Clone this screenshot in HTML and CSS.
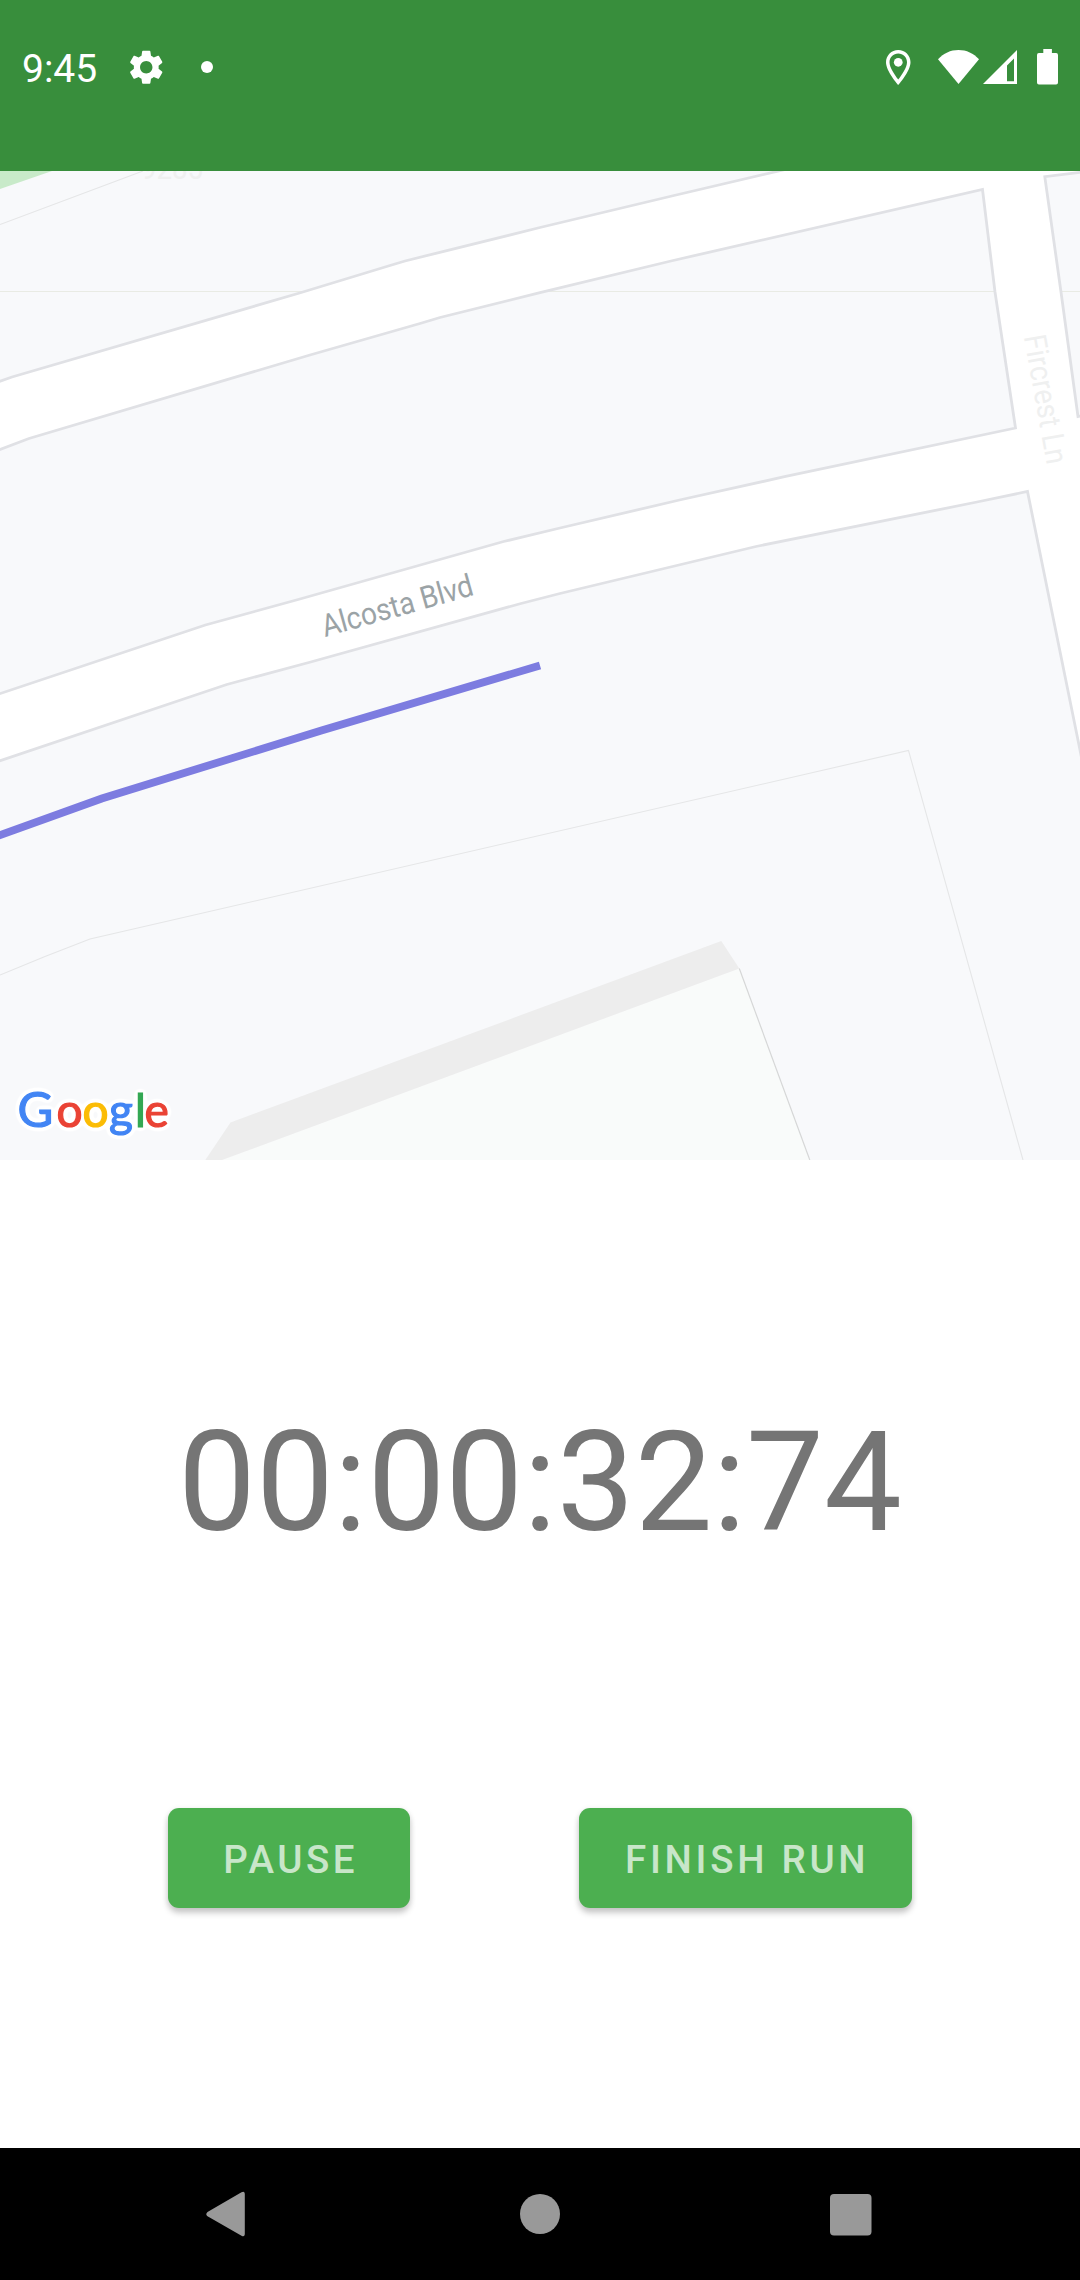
FILE: index.html
```html
<!DOCTYPE html>
<html lang="en">
<head>
<meta charset="utf-8">
<title>Run tracker</title>
<link rel="stylesheet" href="styles.css">
</head>
<body>
<div class="screen">
  <header class="status-bar">
    <div class="status-left">
      <span class="clock">9:45</span>
      <svg class="gear" viewBox="2 2 20 20"><path d="M19.14 12.94c.04-.3.06-.61.06-.94 0-.32-.02-.64-.07-.94l2.03-1.58c.18-.14.23-.41.12-.61l-1.92-3.32c-.12-.22-.37-.29-.59-.22l-2.39.96c-.5-.38-1.03-.7-1.62-.94l-.36-2.54c-.04-.24-.24-.41-.48-.41h-3.84c-.24 0-.43.17-.47.41l-.36 2.54c-.59.24-1.13.57-1.62.94l-2.39-.96c-.22-.08-.47 0-.59.22L2.74 8.87c-.12.21-.08.47.12.61l2.03 1.58c-.05.3-.09.63-.09.94s.02.64.07.94l-2.03 1.58c-.18.14-.23.41-.12.61l1.92 3.32c.12.22.37.29.59.22l2.39-.96c.5.38 1.03.7 1.62.94l.36 2.54c.05.24.24.41.48.41h3.84c.24 0 .44-.17.47-.41l.36-2.54c.59-.24 1.13-.56 1.62-.94l2.39.96c.22.08.47 0 .59-.22l1.92-3.32c.12-.22.07-.47-.12-.61l-2.01-1.58zM12 15.6c-1.98 0-3.6-1.62-3.6-3.6s1.62-3.6 3.6-3.6 3.6 1.62 3.6 3.6-1.62 3.6-3.6 3.6z"/></svg>
      <span class="dot"></span>
    </div>
    <div class="status-right">
      <svg class="pin" viewBox="5 2 14 20"><path d="M12 2C8.13 2 5 5.13 5 9c0 5.25 7 13 7 13s7-7.75 7-13c0-3.87-3.13-7-7-7zM7 9c0-2.76 2.24-5 5-5s5 2.24 5 5c0 2.88-2.88 7.19-5 9.88C9.92 16.21 7 11.85 7 9z"/><circle cx="12" cy="9" r="2.5"/></svg>
      <svg class="wifi" viewBox="0 0 41 34"><path d="M0 9.3C5.5 3.3 12.500 0 20.500 0S35.500 3.300 41 9.300L20.500 34z"/></svg>
      <svg class="signal" viewBox="0 0 34 34"><path fill-rule="evenodd" d="M34 0V34H0zM31 8.500L24 15.500V31.200H31z"/></svg>
      <svg class="battery" viewBox="0 0 21 35.500"><path d="M6.300 0h8.600v4h4.200a1.900 1.900 0 0 1 1.900 1.900v27.700a1.900 1.900 0 0 1-1.900 1.900H1.900a1.900 1.900 0 0 1-1.900-1.900V5.900A1.900 1.900 0 0 1 1.900 4h4.400z"/></svg>
    </div>
  </header>

  <main class="content">
    <svg class="map" viewBox="0 171 1080 989">
      <defs>
        <filter id="halo" x="-20%" y="-30%" width="140%" height="160%" color-interpolation-filters="sRGB">
          <feGaussianBlur in="SourceAlpha" stdDeviation="2.500" result="blur"/>
          <feComponentTransfer in="blur" result="spread"><feFuncA type="linear" slope="14" intercept="-0.300"/></feComponentTransfer>
          <feFlood flood-color="#fff"/>
          <feComposite in2="spread" operator="in" result="white"/>
          <feMerge><feMergeNode in="white"/><feMergeNode in="SourceGraphic"/></feMerge>
        </filter>
      </defs>
      <rect class="land" y="171" width="1080" height="989"/>
      <path class="park" d="M0 171H52L0 189z"/>
      <path class="parcel" d="M0 224.500L143 171M0 975L45 956.500L90 939L908.500 750.500L1023 1160"/>
      <path class="grid-line" d="M0 291.500H1080"/>
      <text class="label label-faint" x="141" y="178.500" textLength="62" lengthAdjust="spacingAndGlyphs">9285</text>

      <path class="road" d="M-5 383L12 377L299.600 293L390 265.500L405 261L540 227.500L674 195.500L800 166H1090V171.200L1044.800 176.700L1061 292L1078 416.500L1090 414V800L1080 750L1027.500 491.500L977 502L756 546.500L560 593.500L521 603.500L310.700 662L226.800 684.500L-5 762.500V695.300L205.400 625L300 599L503.600 541.500L560 528L679.500 500L784.500 476.700L1015.500 428L995 292L982.500 189.500L671 261L540 292.700L440 317.500L420 323.500L310 355L29 438.500L-5 451.500z"/>
      <text class="label label-faint" transform="translate(1023.800 336.500) rotate(79.800)" textLength="131" lengthAdjust="spacingAndGlyphs">Fircrest Ln</text>
      <text class="label label-road" transform="translate(325 637) rotate(-15.700)" textLength="156" lengthAdjust="spacingAndGlyphs">Alcosta Blvd</text>

      <path class="building-top" d="M739.300 968.500L809.800 1160H222z"/>
      <path class="building-side" d="M721.300 941L739.300 968.500L222 1160H205.300L230.500 1122.500z"/>
      <path class="building-edge" d="M739.300 968.500L809.800 1160"/>
      <path class="route" d="M-5 837L101.800 798.500L321.400 730.500L540 665.500"/>

      <text class="logo" filter="url(#halo)" x="17.500 56.500 82.500 109 135 144.500" y="1127"><tspan class="blue cap">G</tspan><tspan class="red">o</tspan><tspan class="yellow">o</tspan><tspan class="blue">g</tspan><tspan class="green">l</tspan><tspan class="red">e</tspan></text>
    </svg>

    <section class="controls">
      <div class="timer">00:00:32:74</div>
      <div class="actions">
        <button class="btn btn-pause">PAUSE</button>
        <button class="btn btn-finish">FINISH RUN</button>
      </div>
    </section>
  </main>

  <nav class="nav-bar">
    <svg class="nav-icon" viewBox="0 0 48 48"><path d="M42.800 3.800V44.200Q42.500 47.500 39.500 45.700L5.500 26.300Q3 24.300 5.500 22L39.500 2.300Q42.500.5 42.800 3.800z"/></svg>
    <svg class="nav-icon" viewBox="0 0 48 48"><circle cx="24" cy="24" r="20"/></svg>
    <svg class="nav-icon" viewBox="0 0 48 48"><rect x="3" y="4" width="41.500" height="41.500" rx="4"/></svg>
  </nav>
</div>
</body>
</html>
```
FILE: styles.css
```css
* { box-sizing: border-box; }

body {
  margin: 0;
  background: #fff;
  font-family: Roboto, "Liberation Sans", sans-serif;
}

.screen {
  width: 1080px;
  height: 2280px;
  display: flex;
  flex-direction: column;
  overflow: hidden;
}

svg { display: block; flex: none; }

.status-bar {
  height: 171px;
  padding: 49px 22px 0 22px;
  display: flex;
  justify-content: space-between;
  align-items: flex-start;
  background: #388e3c;
  color: #fff;
  fill: #fff;
}

.status-left,
.status-right {
  height: 36px;
  display: flex;
  align-items: center;
}

.clock {
  width: 107px;
  font-size: 39px;
  line-height: 40px;
  padding-top: 4px;
}

.gear { width: 34.5px; height: 34.5px; }

.dot {
  width: 12px;
  height: 12px;
  margin-left: 37.5px;
  border-radius: 50%;
  background: #fff;
}

.pin { width: 24.500px; height: 35px; margin-right: 27.500px; }
.wifi { width: 41px; height: 34px; margin-right: 3.500px; }
.signal { width: 34px; height: 34px; margin-right: 20.500px; }
.battery { width: 21px; height: 35.500px; }

.content {
  flex: 1;
  display: flex;
  flex-direction: column;
}

.map { width: 1080px; height: 989px; }
.land { fill: #f8f9fb; }
.park { fill: #c8eac9; }
.parcel { fill: none; stroke: #e5e6e7; stroke-width: 1.100; }
.grid-line { stroke: #e9ebe4; stroke-width: 1; }
.road { fill: #fff; stroke: #e0e1e5; stroke-width: 2.800; }
.label { font-size: 31px; }
.label-faint { fill: #eff0f0; }
.label-road { fill: #9ba3a6; }
.building-top { fill: #f9fbfa; }
.building-side { fill: #ededed; }
.building-edge { fill: none; stroke: #d6d7d7; stroke-width: 1.200; }
.route { fill: none; stroke: #7d7ce0; stroke-width: 7.800; }

.logo { font-family: Lato, sans-serif; font-size: 46px; stroke-width: 1.200; }
.cap { font-size: 49px; }
.blue { fill: #4285f4; stroke: #4285f4; }
.red { fill: #ea4335; stroke: #ea4335; }
.yellow { fill: #fbbc05; stroke: #fbbc05; }
.green { fill: #34a853; stroke: #34a853; }

.controls {
  flex: 1;
  display: flex;
  flex-direction: column;
  align-items: center;
  padding-top: 242px;
}

.timer {
  height: 162px;
  font-size: 138.600px;
  line-height: 162px;
  color: #757575;
}

.actions {
  width: 1080px;
  margin-top: 244px;
  padding: 0 168px;
  display: flex;
  justify-content: space-between;
}

.btn {
  height: 100px;
  padding: 2px 0 0 3.400px;
  border: 0;
  border-radius: 11px;
  background: #4caf50;
  color: #c8e6c9;
  font-family: inherit;
  font-size: 38.500px;
  font-weight: 500;
  letter-spacing: 3.500px;
  box-shadow: 0 5px 6px rgba(0, 0, 0, .2), 0 1px 6px rgba(0, 0, 0, .08);
}

.btn-pause { width: 242px; }
.btn-finish { width: 333px; letter-spacing: 3.700px; }

.nav-bar {
  height: 132px;
  padding: 0 205px 0 202px;
  display: flex;
  justify-content: space-between;
  align-items: center;
  background: #000;
  fill: #999;
}

.nav-icon { width: 48px; height: 48px; }

.nav-icon:nth-child(2) { margin-left: 3px; }
```
